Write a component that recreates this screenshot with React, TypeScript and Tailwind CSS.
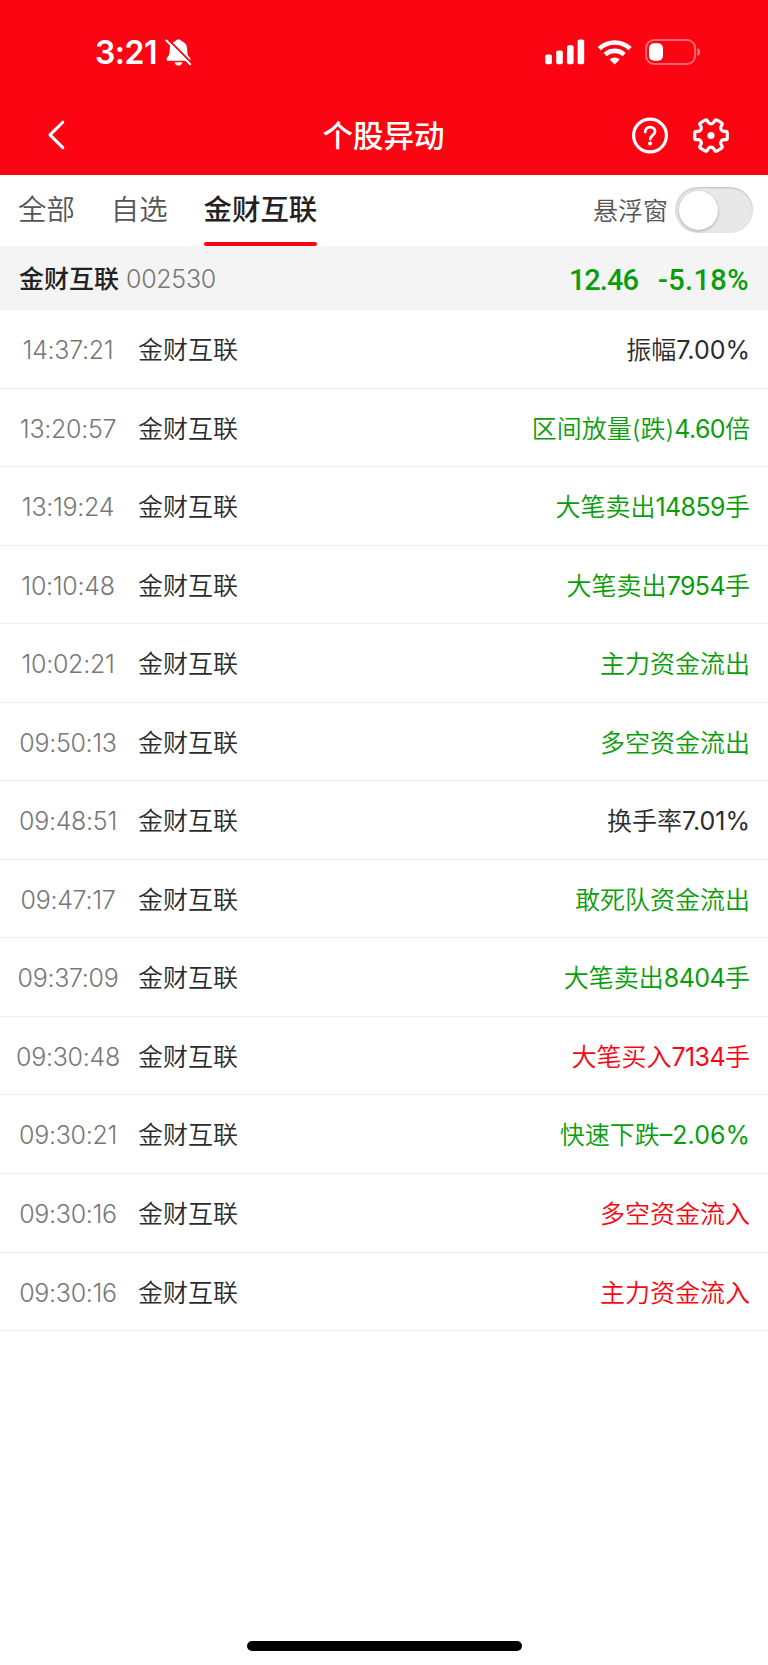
import { clsx } from "clsx"

type Tone = "plain" | "up" | "down"

type Alert = {
  time: string
  label: string
  value?: string
  unit?: string
  tone: Tone
}

const STOCK_NAME = "金财互联"

const alerts: Alert[] = [
  { time: "14:37:21", label: "振幅", value: "7.00", unit: "%", tone: "plain" },
  { time: "13:20:57", label: "区间放量(跌)", value: "4.60", unit: "倍", tone: "down" },
  { time: "13:19:24", label: "大笔卖出", value: "14859", unit: "手", tone: "down" },
  { time: "10:10:48", label: "大笔卖出", value: "7954", unit: "手", tone: "down" },
  { time: "10:02:21", label: "主力资金流出", tone: "down" },
  { time: "09:50:13", label: "多空资金流出", tone: "down" },
  { time: "09:48:51", label: "换手率", value: "7.01", unit: "%", tone: "plain" },
  { time: "09:47:17", label: "敢死队资金流出", tone: "down" },
  { time: "09:37:09", label: "大笔卖出", value: "8404", unit: "手", tone: "down" },
  { time: "09:30:48", label: "大笔买入", value: "7134", unit: "手", tone: "up" },
  { time: "09:30:21", label: "快速下跌", value: "–2.06", unit: "%", tone: "down" },
  { time: "09:30:16", label: "多空资金流入", tone: "up" },
  { time: "09:30:16", label: "主力资金流入", tone: "up" },
]

// Six-toothed cog outline around (0, 0) with softened corners
function cogPath() {
  const corners: [number, number][] = []
  for (let k = 0; k < 6; k++) {
    for (const [deg, r] of [[-21, 11.8], [-14.5, 16.8], [14.5, 16.8], [21, 11.8]]) {
      const a = ((k * 60 + deg) * Math.PI) / 180
      corners.push([r * Math.cos(a), r * Math.sin(a)])
    }
  }
  const towards = (from: [number, number], to: [number, number], d: number) => {
    const len = Math.hypot(to[0] - from[0], to[1] - from[1])
    const t = Math.min(d / len, 0.5)
    return `${(from[0] + (to[0] - from[0]) * t).toFixed(2)} ${(from[1] + (to[1] - from[1]) * t).toFixed(2)}`
  }
  const n = corners.length
  return (
    corners
      .map((c, i) => {
        const prev = corners[(i + n - 1) % n]
        const next = corners[(i + 1) % n]
        return `${i ? "L" : "M"}${towards(c, prev, 1.8)}Q${c[0].toFixed(2)} ${c[1].toFixed(2)} ${towards(c, next, 1.8)}`
      })
      .join("") + "Z"
  )
}

function StatusBar() {
  return (
    <div className="flex h-[104px] items-center justify-between pl-[95px] pr-[67px]">
      <div className="flex items-center gap-[8px]">
        <span className="pt-[1px] text-[32px] leading-none font-semibold tracking-[-0.500px]">3:21</span>
        <svg className="mt-[2px] h-7 w-[27px]" viewBox="0 0 27 28" fill="currentColor">
          <path d="M13.500 0.600c1.500 0 2.600.7 3.200 1.700 3.500 1.100 5.500 4.100 5.500 7.900 0 4.600.8 6.200 2.300 8 .7.800 1 1.400 1 2 0 .9-.7 1.500-1.800 1.500H3.300c-1.100 0-1.800-.6-1.800-1.500 0-.6.3-1.200 1-2 1.500-1.800 2.300-3.400 2.300-8 0-3.800 2-6.800 5.500-7.900.6-1 1.700-1.700 3.200-1.700z" />
          <path d="M9.600 23.200h7.800c-.3 2-1.900 3.400-3.900 3.400s-3.600-1.400-3.900-3.400z" />
          <path d="M2.700 0L26.500 23.800" stroke="#fb0512" strokeWidth="2" />
          <path d="M1.400 1.500L25.200 25.300" stroke="currentColor" strokeWidth="2" strokeLinecap="round" />
        </svg>
      </div>
      <div className="flex items-center">
        <svg className="h-[26px] w-10" viewBox="0 0 40 26" fill="currentColor">
          <rect x="0.300" y="15.500" width="6.600" height="9.800" rx="1.800" />
          <rect x="11.200" y="11.500" width="6.600" height="13.800" rx="1.800" />
          <rect x="22" y="6.200" width="6.600" height="19.100" rx="1.800" />
          <rect x="32.600" y="0.500" width="6.600" height="24.800" rx="1.800" />
        </svg>
        <svg className="ml-3 h-[26px] w-[36px]" viewBox="0 0 36 26" fill="none" stroke="currentColor" strokeWidth="4.600">
          <path d="M2.300 9.600a22.300 22.300 0 0 1 30.800 0" />
          <path d="M8.200 15.700a13.800 13.800 0 0 1 19 0" />
          <path d="M17.700 25.600l-5-5a7.200 7.200 0 0 1 10 0z" fill="currentColor" stroke="none" />
        </svg>
        <svg className="ml-[12px] h-[26px] w-[56px]" viewBox="0 0 56 26" fill="none">
          <rect x="1.100" y="1" width="49" height="24" rx="8" stroke="#fff" strokeOpacity="0.400" strokeWidth="2" />
          <rect x="4" y="4.300" width="14" height="17.400" rx="5" fill="#fff" />
          <path d="M52.500 9c1.500.6 2.500 2.200 2.500 4s-1 3.400-2.500 4z" fill="#fff" fillOpacity="0.500" />
        </svg>
      </div>
    </div>
  )
}

function TitleBar() {
  return (
    <div className="grid h-[70px] grid-cols-[1fr_auto_1fr] items-start">
      <svg className="mt-[15px] ml-[46px] h-8 w-5" viewBox="0 0 20 32" fill="none" stroke="currentColor" strokeWidth="3" strokeLinecap="round" strokeLinejoin="round">
        <path d="M16.800 3.200L4 15.900l12.800 12.700" />
      </svg>
      <h1 className="mt-[10px] mr-[1px] text-[30.500px] leading-[44px] font-medium">个股异动</h1>
      <div className="mt-[13px] mr-[37px] flex items-center justify-end gap-[21px]">
        <svg className="size-10" viewBox="0 0 40 40" fill="none" stroke="currentColor" strokeWidth="3.200" strokeLinecap="round">
          <circle cx="20" cy="18.500" r="16.400" />
          <path d="M15.200 15c0-2.900 2-4.900 4.900-4.900s4.900 1.900 4.900 4.500c0 3.500-4.700 4-4.700 7.400" strokeWidth="2.800" />
          <circle cx="20.100" cy="26.600" r="2" fill="currentColor" stroke="none" />
        </svg>
        <svg className="size-10" viewBox="-20 -18.500 40 40" fill="none" stroke="currentColor" strokeWidth="3.200" strokeLinejoin="round">
          <path d={cogPath()} />
          <circle r="3.600" fill="currentColor" stroke="none" />
        </svg>
      </div>
    </div>
  )
}

function Tabs() {
  return (
    <nav className="flex h-[71px] items-stretch justify-between pr-[15px] pl-[18px] text-[#555555]">
      <div className="flex gap-[36px] text-[28.400px] leading-[69px]">
        <button className="pb-[2px] font-[350]">全部</button>
        <button className="pb-[2px] font-[350]">自选</button>
        <button className="relative pb-[2px] font-medium text-[#222222]">
          {STOCK_NAME}
          <span className="absolute inset-x-0 bottom-0 h-[3.500px] rounded-sm bg-[#fb0512]" />
        </button>
      </div>
      <div className="flex items-center gap-[7px]">
        <span className="pt-[3px] text-[25px] leading-none font-[350]">悬浮窗</span>
        <button role="switch" aria-checked="false" className="h-[46px] w-[78px] rounded-full bg-[#e8e8e8] p-[3.500px] shadow-[inset_0_1px_2px_rgba(0,0,0,0.180)]">
          <span className="block size-[39px] rounded-full bg-white shadow-[0_1px_3px_rgba(0,0,0,0.300)]" />
        </button>
      </div>
    </nav>
  )
}

function StockSummary() {
  return (
    <div className="flex h-[64.500px] items-center justify-between bg-[#f4f4f4] px-[19px] pt-[3px]">
      <div className="flex items-baseline gap-[7px] text-[25px]">
        <span className="font-medium text-[#222222]">{STOCK_NAME}</span>
        <span className="font-light tracking-[-0.300px] text-[#777777]">002530</span>
      </div>
      <div className="flex gap-[20px] pt-[2px] font-[Roboto] text-[29px] font-medium text-[#0a9d0a]">
        <span className="tracking-[-1px]">12.46</span>
        <span className="tracking-[0.400px]">-5.18%</span>
      </div>
    </div>
  )
}

function AlertRow({ alert }: { alert: Alert }) {
  return (
    <li className="flex h-[78.550px] items-center border-b border-[#eeeeee] pt-[4px] pr-[18px] text-[25px] font-[350]">
      <span className="w-[138px] pr-[2px] text-center font-light tracking-[-0.300px] text-[#777777]">{alert.time}</span>
      <span className="text-[#2b2b2b]">{STOCK_NAME}</span>
      <span
        className={clsx(
          "ml-auto",
          alert.tone === "plain" && "text-[#2b2b2b]",
          alert.tone === "up" && "text-[#fb0512]",
          alert.tone === "down" && "text-[#0a9d0a]"
        )}
      >
        {alert.label}
        {alert.value && (
          <span className={clsx("font-normal", alert.unit !== "%" && "tracking-[-0.600px]")}>{alert.value}</span>
        )}
        {alert.unit && <span className={clsx(alert.unit === "%" && "font-normal")}>{alert.unit}</span>}
      </span>
    </li>
  )
}

export default function App() {
  return (
    <div className="flex h-[1665px] w-[768px] flex-col overflow-hidden bg-white font-[Inter,'Noto_Sans_CJK_SC',sans-serif]">
      <header className="h-[174.500px] bg-[#fb0512] text-white">
        <StatusBar />
        <TitleBar />
      </header>
      <Tabs />
      <StockSummary />
      <ul>
        {alerts.map((alert, i) => (
          <AlertRow key={i} alert={alert} />
        ))}
      </ul>
      <div className="mx-auto mt-auto mb-[14px] h-[10px] w-[275px] rounded-full bg-black" />
    </div>
  )
}
